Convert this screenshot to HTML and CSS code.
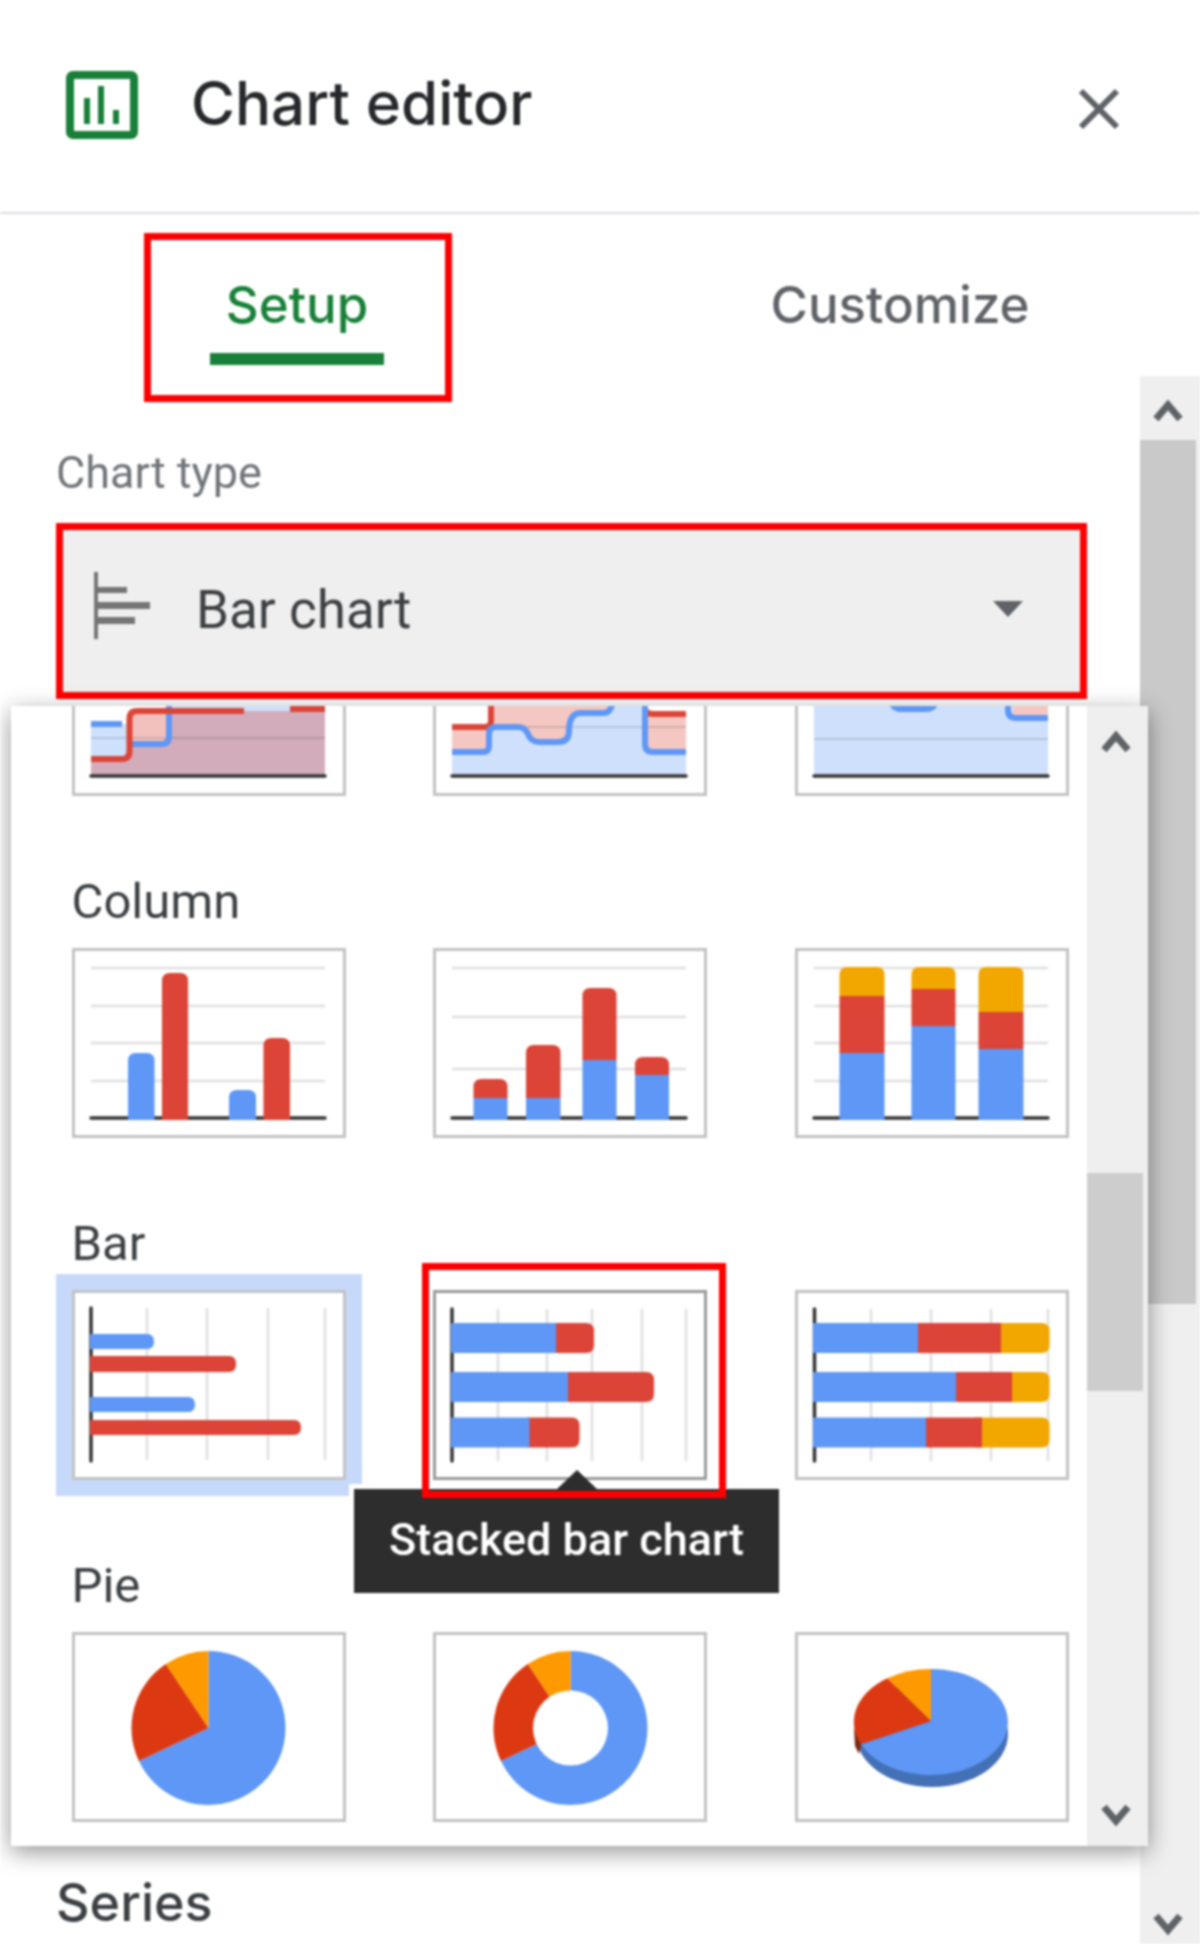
FILE: index.html
```html
<!DOCTYPE html>
<html lang="en">
<head>
<meta charset="utf-8">
<title>Chart editor</title>
<link rel="stylesheet" href="styles.css">
</head>
<body>
<div class="panel">
  <header class="header">
    <svg class="app-icon" viewBox="0 0 72 68"><rect class="app-frame" x="4" y="4" width="64" height="60" rx="3"/><path class="app-bars" d="M18 27h6v26h-6zM32 15h6v38h-6zM47 39h6v14h-6z"/></svg>
    <h1 class="title">Chart editor</h1>
    <svg class="close" viewBox="0 0 44 44"><path d="M4 4L40 40M40 4L4 40"/></svg>
  </header>
  <nav class="tabs">
    <div class="tab-cell tab-cell-first">
      <div class="tab tab-active"><span class="tab-label">Setup</span><span class="tab-line"></span><span class="annot annot-tab"></span></div>
    </div>
    <div class="tab-cell">
      <div class="tab"><span class="tab-label">Customize</span><span class="tab-line tab-line-off"></span></div>
    </div>
  </nav>
  <div class="main">
    <div class="form">
      <div class="field-label">Chart type</div>
      <div class="select">
        <svg class="select-icon" viewBox="0 0 56 67"><path d="M0 0h4v67H0zM4 15h29v6H4zM4 30h52v7H4zM4 45h37v7H4z"/></svg>
        <span class="select-text">Bar chart</span>
        <svg class="select-arrow" viewBox="0 0 30 16"><path d="M0 0H30L15 16Z"/></svg>
      </div>
      <h2 class="section">Series</h2>
    </div>
    <div class="scrollbar">
      <div class="sb-btn"><svg class="chev" viewBox="0 0 30 24"><polyline points="3,21 15,7 27,21"/></svg></div>
      <div class="sb-thumb sb-thumb-outer"></div>
      <div class="sb-btn sb-btn-end"><svg class="chev" viewBox="0 0 30 24"><polyline points="3,3 15,17 27,3"/></svg></div>
    </div>

    <div class="picker">
      <div class="picker-scroll">
        <div class="thumbs thumbs-cut">
          <div class="thumb">
            <svg viewBox="3 3 268 184">
              <path class="a-blue" d="M19 118H57V138H97V90H253V170H19Z"/>
              <path class="a-red" d="M19 153H57.5V105H253V170H19Z"/>
              <path class="grid-tint" d="M19 132H253"/>
              <path class="l-blue" d="M19 118H50M57 138H90Q97 138 97 130V90"/>
              <path class="l-red" d="M19 153H50Q57.5 153 57.5 145V113Q57.5 105 65 105H172M218 103H253"/>
              <path class="axis" d="M19 170H253"/>
            </svg>
          </div>
          <div class="thumb">
            <svg viewBox="3 3 268 184">
              <path class="a-red-solid" d="M19 121H58V90H180V170H19ZM212 108H253V170H212Z"/>
              <path class="a-blue-solid" d="M19 146H50Q56 146 56 140V128Q56 121 63 121H85Q92 121 95 128Q98 136 106 136H125Q136 136 136 125Q136 107 148 107H170Q180 107 180 90H212V138Q212 146 220 146H253V170H19Z"/>
              <path class="grid-tint" d="M19 121H253"/>
              <path class="l-red" d="M19 121H52Q58 121 58 115V90M212 90V102Q212 108 220 108H253"/>
              <path class="l-blue" d="M19 146H50Q56 146 56 140V128Q56 121 63 121H85Q92 121 95 128Q98 136 106 136H125Q136 136 136 125Q136 107 148 107H170Q180 107 180 90M212 90V138Q212 146 220 146H253"/>
              <path class="axis" d="M19 170H253"/>
            </svg>
          </div>
          <div class="thumb">
            <svg viewBox="3 3 268 184">
              <path class="a-blue-solid" d="M19 90H253V170H19Z"/>
              <path class="a-red-solid" d="M218 90H253V109H218Z"/>
              <path class="grid-tint" d="M19 133H253"/>
              <path class="l-blue" d="M97 98Q100 103 106 103H130Q138 103 140 98M213 90V104Q213 112 221 112H253"/>
              <path class="axis" d="M19 170H253"/>
            </svg>
          </div>
        </div>

        <div class="group">
          <div class="group-label">Column</div>
          <div class="thumbs">
            <div class="thumb">
              <svg viewBox="3 3 268 184">
                <path class="grid" d="M19 20H253M19 58H253M19 95H253M19 133H253"/>
                <path class="axis" d="M19 170H253"/>
                <path class="f-blue" d="M56 172V113Q56 105 64 105H74.5Q82.5 105 82.5 113V172Z"/>
                <path class="f-red" d="M90 172V33Q90 25 98 25H108Q116 25 116 33V172Z"/>
                <path class="f-blue" d="M157 172V150Q157 142 165 142H176Q184 142 184 150V172Z"/>
                <path class="f-red" d="M191.5 172V98Q191.5 90 199.5 90H210Q218 90 218 98V172Z"/>
              </svg>
            </div>
            <div class="thumb">
              <svg viewBox="3 3 268 184">
                <path class="grid" d="M19 20H253M19 69H253M19 121H253"/>
                <path class="axis" d="M19 170H253"/>
                <path class="f-red" d="M40.5 150V139Q40.5 131 48.5 131H66.5Q74.5 131 74.5 139V150Z"/>
                <path class="f-blue" d="M40.5 150H74.5V172H40.5Z"/>
                <path class="f-red" d="M93 150V105Q93 97 101 97H119.5Q127.5 97 127.5 105V150Z"/>
                <path class="f-blue" d="M93 150H127.5V172H93Z"/>
                <path class="f-red" d="M149.5 112V48Q149.5 40 157.5 40H175.5Q183.5 40 183.5 48V112Z"/>
                <path class="f-blue" d="M149.5 112H183.5V172H149.5Z"/>
                <path class="f-red" d="M202 127V117Q202 109 210 109H228Q236 109 236 117V127Z"/>
                <path class="f-blue" d="M202 127H236V172H202Z"/>
              </svg>
            </div>
            <div class="thumb">
              <svg viewBox="3 3 268 184">
                <path class="grid" d="M19 20H253M19 58H253M19 95H253M19 133H253"/>
                <path class="axis" d="M19 170H253"/>
                <path class="f-gold" d="M44.5 48V27Q44.5 19 52.5 19H81.5Q89.5 19 89.5 27V48Z"/>
                <path class="f-red" d="M44.5 48H89.5V105H44.5Z"/>
                <path class="f-blue" d="M44.5 105H89.5V172H44.5Z"/>
                <path class="f-gold" d="M116.5 41V27Q116.5 19 124.5 19H152.5Q160.5 19 160.5 27V41Z"/>
                <path class="f-red" d="M116.5 41H160.5V78H116.5Z"/>
                <path class="f-blue" d="M116.5 78H160.5V172H116.5Z"/>
                <path class="f-gold" d="M183.5 64V27Q183.5 19 191.5 19H220.5Q228.5 19 228.5 27V64Z"/>
                <path class="f-red" d="M183.5 64H228.5V101H183.5Z"/>
                <path class="f-blue" d="M183.5 101H228.5V172H183.5Z"/>
              </svg>
            </div>
          </div>
        </div>

        <div class="group">
          <div class="group-label">Bar</div>
          <div class="thumbs">
            <div class="thumb thumb-selected">
              <svg viewBox="3 3 268 184">
                <path class="grid" d="M75 18V170M135 18V170M196 18V170M253 18V170"/>
                <path class="axis" d="M19 18V171"/>
                <path class="f-blue" d="M18 44H75Q82 44 82 51.5Q82 59 75 59H18Z"/>
                <path class="f-red" d="M18 66H157Q164 66 164 74Q164 82 157 82H18Z"/>
                <path class="f-blue" d="M18 107H116Q123 107 123 114.5Q123 122 116 122H18Z"/>
                <path class="f-red" d="M18 130H222Q229 130 229 137.5Q229 145 222 145H18Z"/>
              </svg>
            </div>
            <div class="thumb thumb-hover">
              <svg viewBox="3 3 268 184">
                <path class="grid" d="M65 19V171M114 19V171M159 19V171M209 19V171M253 19V171"/>
                <path class="axis" d="M19 19V171"/>
                <path class="f-red" d="M120 33H153Q161 33 161 41V55Q161 63 153 63H120Z"/>
                <path class="f-blue" d="M18 33H123V63H18Z"/>
                <path class="f-red" d="M132 82H213Q221 82 221 90V104Q221 112 213 112H132Z"/>
                <path class="f-blue" d="M18 82H135V112H18Z"/>
                <path class="f-red" d="M94 127.500H138.500Q146.500 127.500 146.500 135.500V149.500Q146.500 157.500 138.500 157.500H94Z"/>
                <path class="f-blue" d="M18 127.500H96.500V157.500H18Z"/>
              </svg>
              <span class="annot annot-thumb"></span>
              <div class="tooltip">Stacked bar chart</div>
            </div>
            <div class="thumb">
              <svg viewBox="3 3 268 184">
                <path class="grid" d="M76 19V171M136 19V171M196 19V171M253 19V171"/>
                <path class="axis" d="M19.500 19V171"/>
                <path class="f-gold" d="M200 33H246.500Q254.500 33 254.500 41V55Q254.500 63 246.500 63H200Z"/>
                <path class="f-red" d="M123 33H206V63H123Z"/>
                <path class="f-blue" d="M18 33H123V63H18Z"/>
                <path class="f-gold" d="M210 82H246.500Q254.500 82 254.500 90V104Q254.500 112 246.500 112H210Z"/>
                <path class="f-red" d="M161 82H217V112H161Z"/>
                <path class="f-blue" d="M18 82H161V112H18Z"/>
                <path class="f-gold" d="M180 127.500H246.500Q254.500 127.500 254.500 135.500V149.500Q254.500 157.500 246.500 157.500H180Z"/>
                <path class="f-red" d="M131 127.500H187V157.500H131Z"/>
                <path class="f-blue" d="M18 127.500H131V157.500H18Z"/>
              </svg>
            </div>
          </div>
        </div>

        <div class="group">
          <div class="group-label">Pie</div>
          <div class="thumbs">
            <div class="thumb">
              <svg viewBox="3 3 268 184">
                <g transform="translate(1.500 0)">
                  <path class="f-blue" d="M135 96L135 19A77 77 0 1 1 65.400 129Z"/>
                  <path class="f-pie-red" d="M135 96L65.400 129A77 77 0 0 1 92.300 32Z"/>
                  <path class="f-pie-orange" d="M135 96L92.300 32A77 77 0 0 1 135 19Z"/>
                </g>
              </svg>
            </div>
            <div class="thumb">
              <svg viewBox="3 3 268 184">
                <g transform="translate(2.500 0)">
                  <path class="f-blue" d="M135 96L135 19A77 77 0 1 1 65.400 129Z"/>
                  <path class="f-pie-red" d="M135 96L65.400 129A77 77 0 0 1 92.300 32Z"/>
                  <path class="f-pie-orange" d="M135 96L92.300 32A77 77 0 0 1 135 19Z"/>
                  <circle class="f-hole" cx="135" cy="96" r="37.500"/>
                </g>
              </svg>
            </div>
            <div class="thumb">
              <svg viewBox="3 3 268 184">
                <ellipse class="f-pie-rim" cx="137" cy="102" rx="76" ry="53"/>
                <path class="f-pie-dark" d="M59 96L66 112L64 122L60 114Z"/>
                <path class="f-blue" d="M136 89L136 37A77 53 0 1 1 66 112.300Z"/>
                <path class="f-pie-red" d="M136 89L66 112.300A77 53 0 0 1 92.300 46.300Z"/>
                <path class="f-pie-orange" d="M136 89L92.300 46.300A77 53 0 0 1 136 37Z"/>
              </svg>
            </div>
          </div>
        </div>
      </div>
      <div class="scrollbar scrollbar-inner">
        <div class="sb-btn"><svg class="chev" viewBox="0 0 30 24"><polyline points="3,21 15,7 27,21"/></svg></div>
        <div class="sb-thumb sb-thumb-inner"></div>
        <div class="sb-btn sb-btn-end-inner"><svg class="chev" viewBox="0 0 30 24"><polyline points="3,3 15,17 27,3"/></svg></div>
      </div>
    </div>
  </div>
</div>
</body>
</html>
```
FILE: styles.css
```css
* { box-sizing: border-box; }
html, body { margin: 0; background: #fff; }
body { font-family: Roboto, "Liberation Sans", sans-serif; }

.panel {
  width: 1200px;
  height: 1944px;
  display: flex;
  flex-direction: column;
  overflow: hidden;
  filter: blur(1px);
}

/* header */
.header {
  height: 214px;
  flex: none;
  border-bottom: 2px solid #dadce0;
  display: flex;
  align-items: flex-start;
  padding-left: 66px;
  padding-top: 71px;
  position: relative;
}
.app-icon { width: 72px; height: 68px; flex: none; }
.app-frame { fill: #fff; stroke: #188038; stroke-width: 8; }
.app-bars { fill: #188038; }
.title {
  margin: 4px 0 0 53px;
  font-family: Inter, Roboto, sans-serif;
  font-weight: 500;
  font-size: 60px;
  line-height: 56px;
  color: #26282c;
  white-space: nowrap;
}
.close { width: 44px; height: 44px; margin-left: auto; margin-right: 79px; margin-top: 16px; flex: none; }
.close path { stroke: #5f6368; stroke-width: 6; fill: none; }

/* tabs */
.tabs { height: 162px; flex: none; display: grid; grid-template-columns: 600px 600px; }
.tab-cell { display: flex; justify-content: center; align-items: flex-start; padding-top: 62px; }
.tab-cell-first { padding-right: 6px; }
.tab { width: 174px; display: flex; flex-direction: column; align-items: center; position: relative; }
.tab-label {
  font-family: Inter, Roboto, sans-serif;
  font-size: 51px;
  line-height: 58px;
  height: 77px;
  font-weight: 500;
  white-space: nowrap;
  color: #5f6368;
}
.tab-active .tab-label { color: #188038; }
.tab-line { width: 174px; height: 12px; background: #188038; flex: none; }
.tab-line-off { background: transparent; }

/* annotation boxes lie over the content */
.annot { position: absolute; border: 7px solid #f00; pointer-events: none; }
.annot-tab { left: -66px; right: -68px; top: -43px; bottom: -37px; }
.annot-thumb { left: -14px; right: -22px; top: -30px; bottom: -21px; z-index: 3; }

/* main */
.main { flex: 1; display: flex; position: relative; min-height: 0; }
.form { flex: 1; padding-left: 56px; padding-top: 69px; padding-bottom: 6px; display: flex; flex-direction: column; }
.field-label { font-size: 45px; line-height: 56px; color: #70757a; }
.select {
  width: 1031px;
  height: 176px;
  margin-top: 22px;
  border: 7px solid #f00;
  background: #efefef;
  display: flex;
  align-items: center;
  padding-left: 31px;
  padding-right: 57px;
  flex: none;
}
.select-icon { width: 56px; height: 67px; margin-bottom: 11px; flex: none; }
.select-icon path { fill: #757575; }
.select-text { margin-left: 46px; margin-bottom: 3px; font-size: 53px; line-height: 60px; color: #3c4043; }
.select-arrow { width: 30px; height: 16px; margin-left: auto; margin-bottom: 4px; flex: none; }
.select-arrow path { fill: #5f6368; }
.section {
  margin: auto 0 0;
  font-weight: 500;
  font-family: Inter, Roboto, sans-serif;
  font-size: 52px;
  line-height: 70px;
  color: #3c4043;
}

/* scrollbars */
.scrollbar { width: 60px; flex: none; background: #efefef; display: flex; flex-direction: column; }
.sb-btn { height: 64px; flex: none; display: flex; justify-content: center; padding-top: 22px; padding-right: 4px; }
.chev { width: 30px; height: 24px; }
.chev polyline { fill: none; stroke: #5f6368; stroke-width: 7; }
.sb-thumb { width: 56px; flex: none; background: #c9c9c9; }
.sb-thumb-outer { height: 864px; }
.sb-btn-end { margin-top: auto; height: 46px; padding-top: 15px; }
.scrollbar-inner { width: 61px; }
.sb-thumb-inner { height: 218px; margin-top: 403px; background: #cdcdcd; }
.sb-btn-end-inner { margin-top: 413px; height: 46px; padding-top: 0; }
.scrollbar-inner .sb-btn { padding-top: 23px; }
.scrollbar-inner .sb-btn-end-inner { padding-top: 0; }

/* picker popup */
.picker {
  position: absolute;
  left: 11px;
  top: 330px;
  width: 1137px;
  height: 1140px;
  background: #fff;
  display: flex;
  box-shadow: 0 6px 22px rgba(0, 0, 0, 0.42);
  z-index: 2;
}
.picker-scroll { flex: 1; overflow: hidden; padding-left: 60.5px; }
.thumbs { display: grid; grid-template-columns: repeat(3, 274px); column-gap: 87.5px; }
.thumbs-cut { margin-top: -100px; margin-bottom: 76px; }
.group { padding-bottom: 76px; }
.group-label { font-size: 49px; line-height: 60px; margin-bottom: 16px; color: #3c4043; }
.thumb { width: 274px; height: 190px; border: 3px solid #c2c2c2; background: #fff; position: relative; }
.thumb svg { display: block; width: 268px; height: 184px; }
.thumb-selected { box-shadow: 0 0 0 16px #c6d9fb; }
.thumb-hover { border-color: #9a9a9a; }

/* tooltip */
.tooltip {
  position: absolute;
  left: -82px;
  top: 196px;
  width: 425px;
  height: 104px;
  background: #2d2d2d;
  color: #fff;
  font-weight: 500;
  font-size: 45px;
  line-height: 102px;
  text-align: center;
  white-space: nowrap;
  z-index: 2;
  box-shadow: 0 0 0 5px #fff;
}
.tooltip::before {
  content: "";
  position: absolute;
  left: 203px;
  top: -19px;
  border-left: 20px solid transparent;
  border-right: 20px solid transparent;
  border-bottom: 19px solid #2d2d2d;
}

/* chart marks */
.grid { stroke: #e0e0e0; stroke-width: 2.5; fill: none; }
.grid-tint { stroke: rgba(0, 0, 0, 0.12); stroke-width: 2; fill: none; }
.axis { stroke: #333; stroke-width: 3.5; fill: none; stroke-linecap: round; }
.f-blue { fill: #5e97f6; }
.f-red { fill: #db4437; }
.f-gold { fill: #f2a600; }
.f-pie-red { fill: #dc3912; }
.f-pie-orange { fill: #ff9900; }
.f-pie-rim { fill: #4470b5; }
.f-pie-dark { fill: #7b2a0f; }
.f-hole { fill: #fff; }
.a-blue { fill: rgba(94, 151, 246, 0.3); }
.a-red { fill: rgba(219, 68, 55, 0.33); }
.a-blue-solid { fill: #cfe0fc; }
.a-red-solid { fill: #f4c7c3; }
.l-blue { stroke: #5e97f6; stroke-width: 6; fill: none; }
.l-red { stroke: #db4437; stroke-width: 6; fill: none; }
```
